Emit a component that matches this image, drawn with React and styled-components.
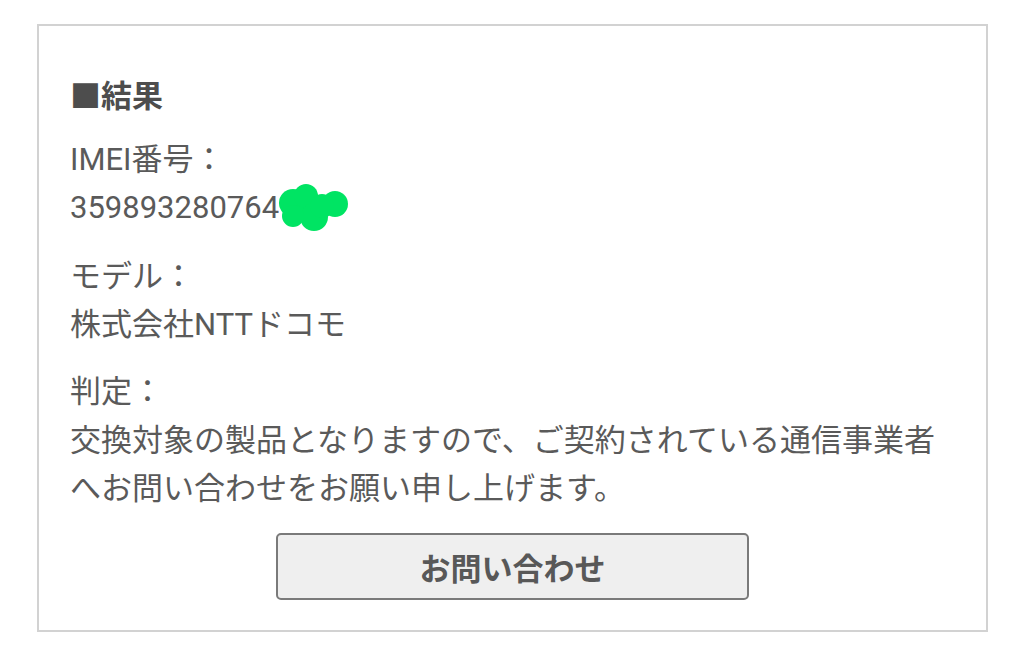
import React from "react";
import styled, { createGlobalStyle } from "styled-components";

const Global = createGlobalStyle`
  html, body { margin: 0; padding: 0; background: #ffffff; }
  body { font-family: Roboto, "Noto Sans CJK JP", sans-serif; }
`;

const Page = styled.div`
  padding: 24px 36px 0 37px;
`;

const Card = styled.section`
  box-sizing: border-box;
  width: 951px;
  height: 608px;
  border: 2px solid #d2d2d2;
  padding: 47px 31px 30px 31px;
  display: flex;
  flex-direction: column;
  color: #5a5a5a;
  font-size: 31px;
  line-height: 48px;
`;

const Heading = styled.h2`
  margin: 0 0 15px 0;
  font-size: 31px;
  font-weight: 700;
  line-height: 48px;
  color: #4d4d4d;
`;

const Field = styled.div`
  margin-bottom: ${(p) => p.$gap || 0}px;
`;

const Line = styled.div`
  white-space: nowrap;
  margin-top: ${(p) => p.$shift || 0}px;
`;

const Masked = styled.span`
  position: relative;
  display: inline-block;
  width: 40px;
  height: 48px;
  vertical-align: top;
`;

const Blob = styled.svg`
  position: absolute;
  left: -1px;
  top: 0px;
  width: 72px;
  height: 48px;
`;

const ButtonRow = styled.div`
  display: flex;
  justify-content: center;
  margin-top: 20px;
`;

const Button = styled.button`
  box-sizing: border-box;
  width: 473px;
  height: 67px;
  background: #efefef;
  border: 2px solid #7a7a7a;
  border-radius: 5px;
  font-family: Roboto, "Noto Sans CJK JP", sans-serif;
  font-size: 31px;
  font-weight: 700;
  color: #585858;
  cursor: pointer;
`;

export default function App() {
  return (
    <>
      <Global />
      <Page>
        <Card>
          <Heading>■結果</Heading>
          <Field $gap={21}>
            <Line>IMEI番号：</Line>
            <Line>
              359893280764
              <Masked>
                <Blob viewBox="0 0 72 48">
                  <g fill="#00e463">
                    <circle cx="15" cy="19" r="14" />
                    <circle cx="28" cy="12" r="12" />
                    <circle cx="57" cy="20" r="13" />
                    <circle cx="36" cy="33" r="14" />
                    <circle cx="15" cy="32" r="11" />
                    <circle cx="44" cy="22" r="12" />
                  </g>
                </Blob>
              </Masked>
            </Line>
          </Field>
          <Field $gap={19}>
            <Line>モデル：</Line>
            <Line>株式会社NTTドコモ</Line>
          </Field>
          <Field>
            <Line>判定：</Line>
            <Line $shift={1}>交換対象の製品となりますので、ご契約されている通信事業者</Line>
            <Line>へお問い合わせをお願い申し上げます。</Line>
          </Field>
          <ButtonRow>
            <Button>お問い合わせ</Button>
          </ButtonRow>
        </Card>
      </Page>
    </>
  );
}
